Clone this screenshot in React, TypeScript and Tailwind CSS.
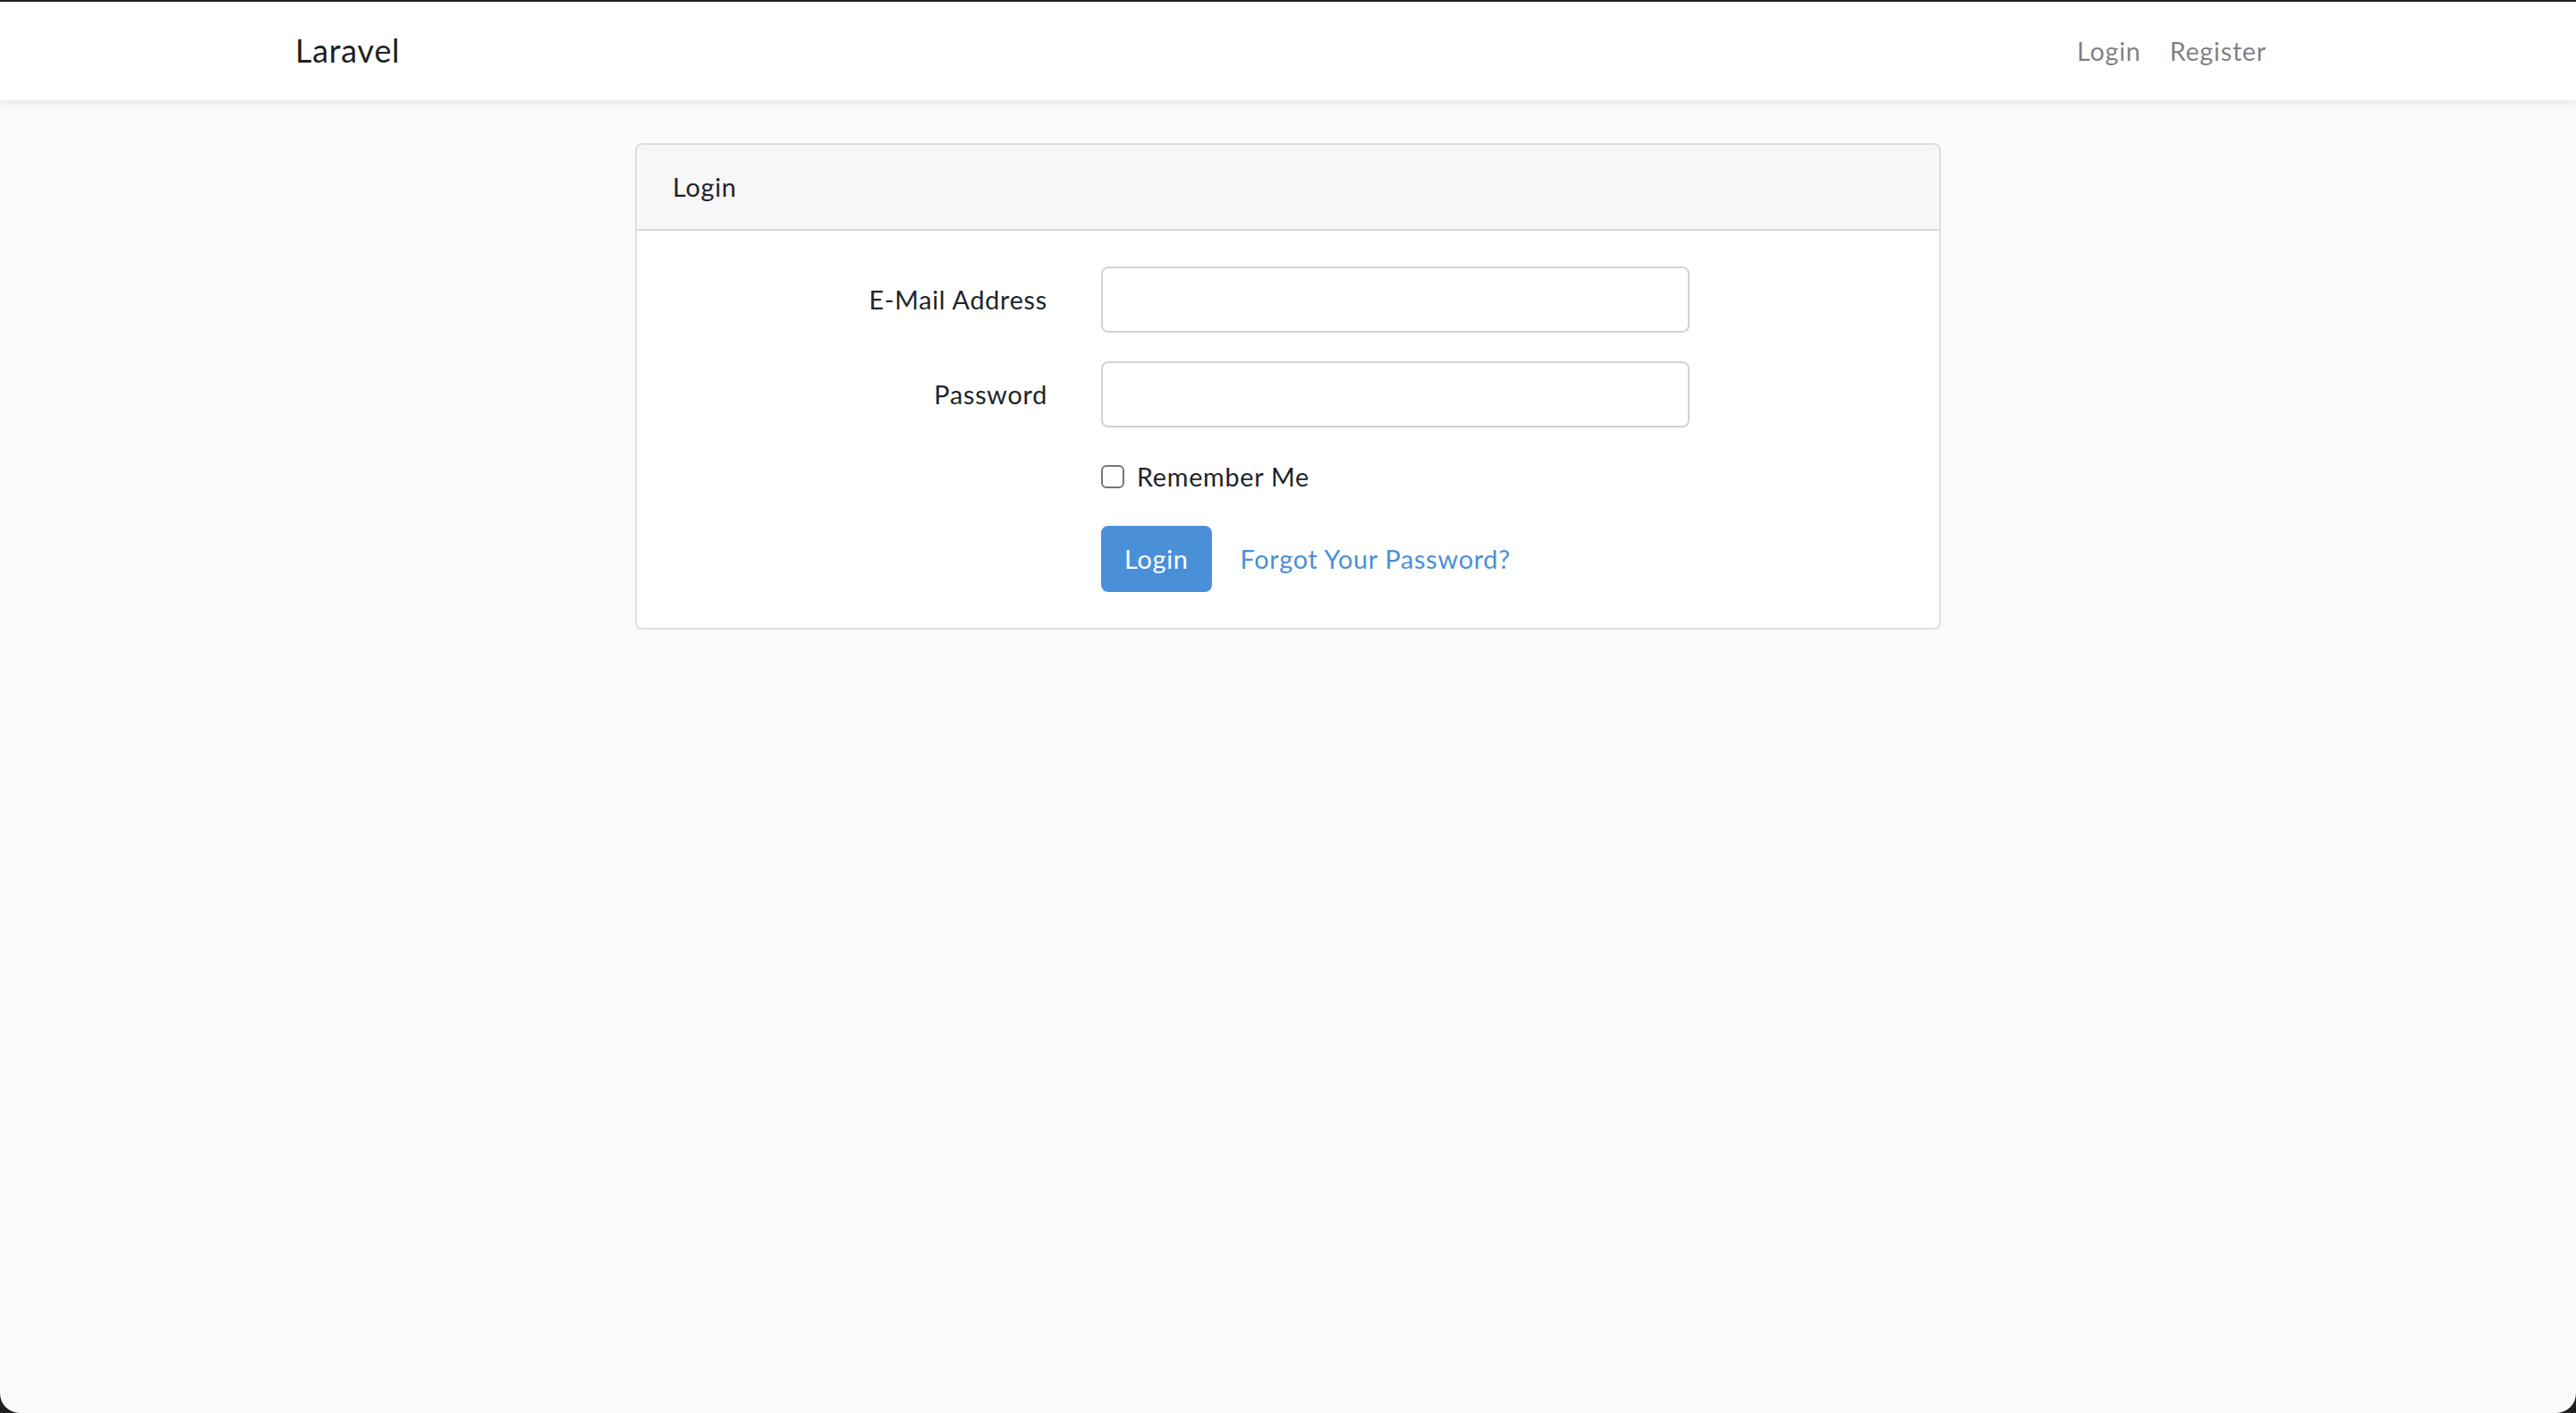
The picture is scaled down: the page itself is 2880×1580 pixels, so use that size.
import React from "react";

const font = { fontFamily: "Lato, 'Noto Sans', sans-serif" };

export default function App() {
  return (
    <div className="w-full h-[1580px] bg-[#1f1f1f] pt-[2px]" style={font}>
      <div className="h-[1578px] bg-[#f8fafc] rounded-b-[22px] overflow-hidden text-[#212529] text-[28.8px] leading-[46.08px] tracking-[0.025em]">
        <nav className="bg-white shadow-[0_4px_8px_rgba(0,0,0,0.075)]">
          <div className="w-[2280px] mx-auto px-[30px] py-[16px] flex items-center justify-between">
            <a className="text-[36px] leading-[57.6px] py-[10px] text-[rgba(0,0,0,0.9)]">Laravel</a>
            <div className="flex">
              <a className="px-[16px] py-[16px] text-[rgba(0,0,0,0.5)]">Login</a>
              <a className="px-[16px] py-[16px] text-[rgba(0,0,0,0.5)]">Register</a>
            </div>
          </div>
        </nav>
        <main className="py-[48px]">
          <div className="w-[2280px] mx-auto px-[30px]">
            <div className="w-[1460px] mx-auto bg-white border-2 border-[rgba(0,0,0,0.125)] rounded-[8px] overflow-hidden">
              <div className="px-[40px] py-[24px] bg-[rgba(0,0,0,0.03)] border-b-2 border-[rgba(0,0,0,0.125)]">Login</div>
              <div className="p-[40px]">
                <div className="grid grid-cols-[419px_658px] gap-x-[60px] gap-y-[32px]">
                  <label className="text-right pt-[14px]">E-Mail Address</label>
                  <div className="h-[74px] border-2 border-[#ced4da] rounded-[8px] bg-white" />
                  <label className="text-right pt-[14px]">Password</label>
                  <div className="h-[74px] border-2 border-[#ced4da] rounded-[8px] bg-white" />
                  <div />
                  <div className="flex items-start">
                    <div className="mt-[10px] w-[26px] h-[26px] border-2 border-[#767676] rounded-[6px] bg-white shrink-0" />
                    <span className="ml-[14px]">Remember Me</span>
                  </div>
                  <div />
                  <div className="flex items-center">
                    <button className="h-[74px] px-[24px] bg-[#4a90d9] text-white rounded-[8px] border-2 border-[#4a90d9] tracking-[0.025em]">Login</button>
                    <a className="ml-[8px] px-[24px] py-[14px] text-[#4a90d9]">Forgot Your Password?</a>
                  </div>
                </div>
              </div>
            </div>
          </div>
        </main>
      </div>
    </div>
  );
}
